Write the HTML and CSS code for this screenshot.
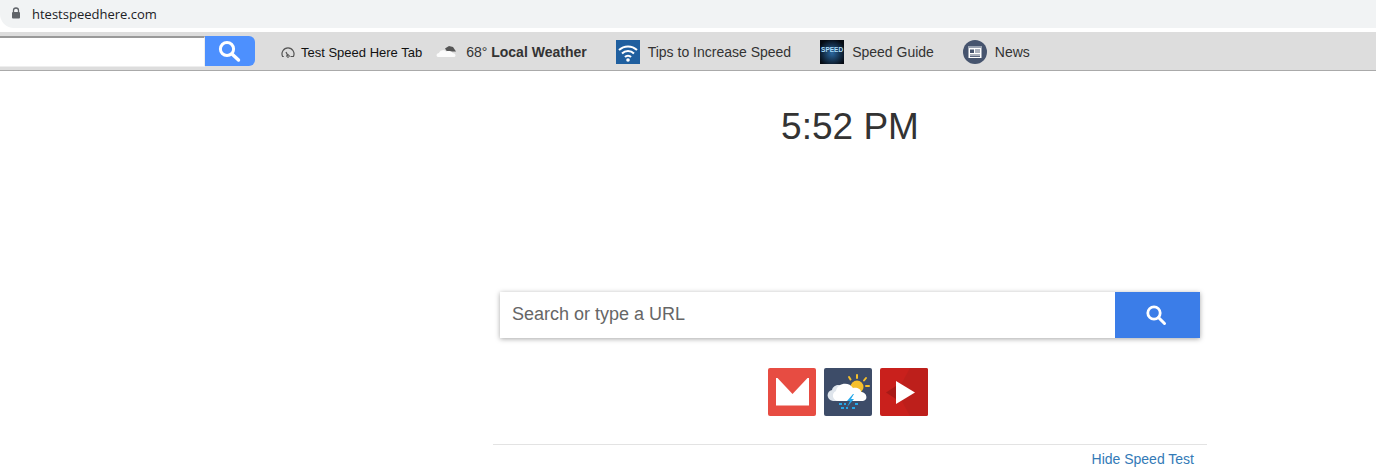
FILE: index.html

```html
<html>

<head>
  <title>Speed Test</title>
  <link rel="stylesheet" href="styles.css">
</head>

<body>
  <div class="addr">
    <svg class="lock" width="10" height="12" viewBox="0 0 10 12">
      <path d="M2.5 5V3.5a2.5 2.5 0 0 1 5 0V5" fill="none" stroke="#5f6368" stroke-width="1.3"/>
      <rect x="1" y="5" width="8" height="6.5" rx="1" fill="#5f6368"/>
    </svg>
    <span class="url">htestspeedhere.com</span>
  </div>

  <div class="bar">
    <div class="bar-search">
      <div class="bar-input"></div>
      <div class="bar-btn">
        <svg width="24" height="24" viewBox="0 0 24 24">
          <circle cx="10" cy="10" r="6.6" fill="none" stroke="#fff" stroke-width="3"/>
          <path d="M15 15l6.5 6" stroke="#fff" stroke-width="3.4" stroke-linecap="round"/>
        </svg>
      </div>
    </div>

    <a class="tab-link">
      <svg width="14" height="11" viewBox="0 0 14 11">
        <path d="M2.800 9.500H1.600A6 6 0 1 1 12.400 9.500H9.500" fill="none" stroke="#555" stroke-width="1.200"/>
        <path d="M5 5l2 4" stroke="#555" stroke-width="1.300"/>
        <circle cx="7" cy="9" r="1.300" fill="none" stroke="#555"/>
      </svg>
      Test Speed Here Tab
    </a>

    <a class="weather">
      <svg width="22" height="14" viewBox="0 0 22 14">
        <path d="M9 3.500l4-2.500 4 1 3 4.500-9 0z" fill="#555"/>
        <path d="M2 12c-2-.500-2-3.500 1-4 .500-2.500 5-4 7-1.500 2-1 6-.500 6.500 1.500 3 0 4 3 2 4z" fill="#fbfbfb"/>
      </svg>
      <span>68&deg; <b>Local Weather</b></span>
    </a>

    <a class="item tips">
      <svg width="24" height="24" viewBox="0 0 24 24">
        <rect width="24" height="24" fill="#1f5f9f"/>
        <path d="M3 10a13 13 0 0 1 18 0M6 13.500a8.500 8.500 0 0 1 12 0M9 17a4 4 0 0 1 6 0" fill="none" stroke="#fff" stroke-width="2"/>
        <circle cx="12" cy="20" r="1.800" fill="#fff"/>
      </svg>
      Tips to Increase Speed
    </a>

    <a class="item guide">
      <span class="speed-pic">SPEED</span>
      Speed Guide
    </a>

    <a class="item news">
      <svg width="24" height="24" viewBox="0 0 24 24">
        <circle cx="12" cy="12" r="12" fill="#46546e"/>
        <rect x="5.500" y="6" width="13" height="12" fill="#fff"/>
        <rect x="5.500" y="6" width="13" height="2" fill="#9aa3b2"/>
        <rect x="7" y="9.500" width="4" height="3.500" fill="#46546e"/>
        <path d="M12 10h5M12 12h5M7 15h10M7 16.500h10" stroke="#46546e" stroke-width=".9"/>
      </svg>
      News
    </a>
  </div>

  <div class="main">
    <div class="clock">5:52 PM</div>

    <div class="search">
      <div class="search-text">Search or type a URL</div>
      <div class="search-btn">
        <svg width="22" height="22" viewBox="0 0 22 22">
          <circle cx="9" cy="9" r="6.200" fill="none" stroke="#fff" stroke-width="2.800"/>
          <path d="M13.500 13.500l6 6" stroke="#fff" stroke-width="3" stroke-linecap="round"/>
        </svg>
      </div>
    </div>

    <div class="apps">
      <svg width="48" height="48" viewBox="0 0 48 48">
        <rect width="48" height="48" rx="2" fill="#e74c42"/>
        <rect x="8" y="10" width="33" height="27.500" fill="#fff"/>
        <path d="M9.500 10h30L24.500 26z" fill="#e74c42"/>
      </svg>
      <svg width="48" height="48" viewBox="0 0 48 48">
        <rect width="48" height="48" rx="2" fill="#3d4c68"/>
        <circle cx="33" cy="19" r="6.500" fill="#f6c02c"/>
        <path d="M33 7v3M42 10l-2 2.500M45 18h-3M25 9l1.500 2.500" stroke="#f6c02c" stroke-width="2" stroke-linecap="round"/>
        <path d="M9 33c-7-1-7-10-1-11 1-5 7-6 10-4l2 15z" fill="#dfe5ec"/>
        <path d="M15 33c-7 0-8-8-3-10 1-8 13-10 17-3 4-1 8 1 8 4 6 0 8 9 1 9z" fill="#fff"/>
        <path d="M29 26l-6 7h3l-3 6 7-8h-3l3-5z" fill="#25a8ea"/>
        <path d="M15 36h3M20 36h2M31 36h3M17 40h3M22 40h2M28 40h3" stroke="#25a8ea" stroke-width="2"/>
      </svg>
      <svg width="48" height="48" viewBox="0 0 48 48">
        <rect width="48" height="48" rx="2" fill="#c9201c"/>
        <path d="M30 0h16a2 2 0 0 1 2 2v44a2 2 0 0 1-2 2H30L17 24z" fill="#bd1f1b"/>
        <path d="M16 18l-10 6.500 10 6.500z" fill="#a81a17"/>
        <path d="M16 13l19 11.500-19 11.500z" fill="#fff"/>
      </svg>
    </div>

    <div class="foot">
      <a class="hide">Hide Speed Test</a>
    </div>
  </div>
</body>

</html>
```

FILE: styles.css

```css
html, body {
  margin: 0;
  padding: 0;
  height: 474px;
  overflow: hidden;
  background: #fff;
  font-family: "Liberation Sans", Arial, sans-serif;
}

.addr {
  height: 28px;
  background: #f1f3f4;
  border-bottom-left-radius: 14px;
  display: flex;
  align-items: center;
  padding-left: 11px;
}
.lock {
  margin-top: -2px;
}
.url {
  font-family: "Open Sans", sans-serif;
  font-size: 13px;
  color: #202124;
  margin-left: 11px;
  margin-top: -1px;
}

.bar {
  margin-top: 4px;
  height: 36px;
  padding-top: 2px;
  background: #ddd;
  border-bottom: 1px solid #aaa;
  display: flex;
  align-items: center;
  font-size: 14px;
  color: #333;
}
.bar svg {
  flex: none;
}

.bar-search {
  display: flex;
  width: 255px;
  height: 30px;
  margin-top: -2px;
  flex: none;
}
.bar-input {
  width: 205px;
  height: 31px;
  background: #fff;
  border-top: 2px solid #999;
  border-bottom: 1px solid #eee;
  border-right: 1px solid #eee;
  box-sizing: border-box;
}
.bar-btn {
  width: 50px;
  height: 30px;
  padding-right: 3px;
  box-sizing: border-box;
  background: #4d90fe;
  border-radius: 0 6px 6px 0;
  display: flex;
  align-items: center;
  justify-content: center;
}

.tab-link {
  display: flex;
  align-items: center;
  gap: 6px;
  margin-left: 26px;
  font-size: 13px;
  color: #111;
}
.weather {
  display: flex;
  align-items: center;
  gap: 8px;
  margin-left: 14px;
  font-size: 14px;
}
.item {
  display: flex;
  align-items: center;
  gap: 8px;
}
.tips {
  margin-left: 29px;
}
.guide {
  margin-left: 29px;
}
.news {
  margin-left: 29px;
}
.speed-pic {
  width: 24px;
  height: 24px;
  background: radial-gradient(circle at 50% 55%, #2a669e, #050a12 80%);
  color: #a9dcfa;
  font-size: 6.500px;
  font-weight: bold;
  line-height: 20px;
  text-align: center;
  overflow: hidden;
  flex: none;
}

.main {
  width: 714px;
  margin-left: 493px;
}
.clock {
  margin-top: 31px;
  font-size: 37px;
  line-height: 50px;
  color: #333;
  text-align: center;
}
.search {
  margin: 140px 7px 0;
  height: 46px;
  display: flex;
  background: #fff;
  box-shadow: 0 1px 5px rgba(0, 0, 0, 0.35);
}
.search-text {
  flex: 1;
  padding-left: 12px;
  font-size: 18px;
  line-height: 44px;
  color: #666;
}
.search-btn {
  width: 85px;
  padding-right: 4px;
  box-sizing: border-box;
  background: #3b7de8;
  display: flex;
  align-items: center;
  justify-content: center;
}
.apps {
  display: flex;
  justify-content: center;
  gap: 8px;
  margin-top: 30px;
  padding-right: 4px;
  height: 48px;
}
.foot {
  margin-top: 28px;
  border-top: 1px solid #e3e3e3;
  text-align: right;
  padding: 6px 13px 0 0;
  font-size: 14px;
  line-height: 16px;
}
.hide {
  color: #337ab7;
}
```
